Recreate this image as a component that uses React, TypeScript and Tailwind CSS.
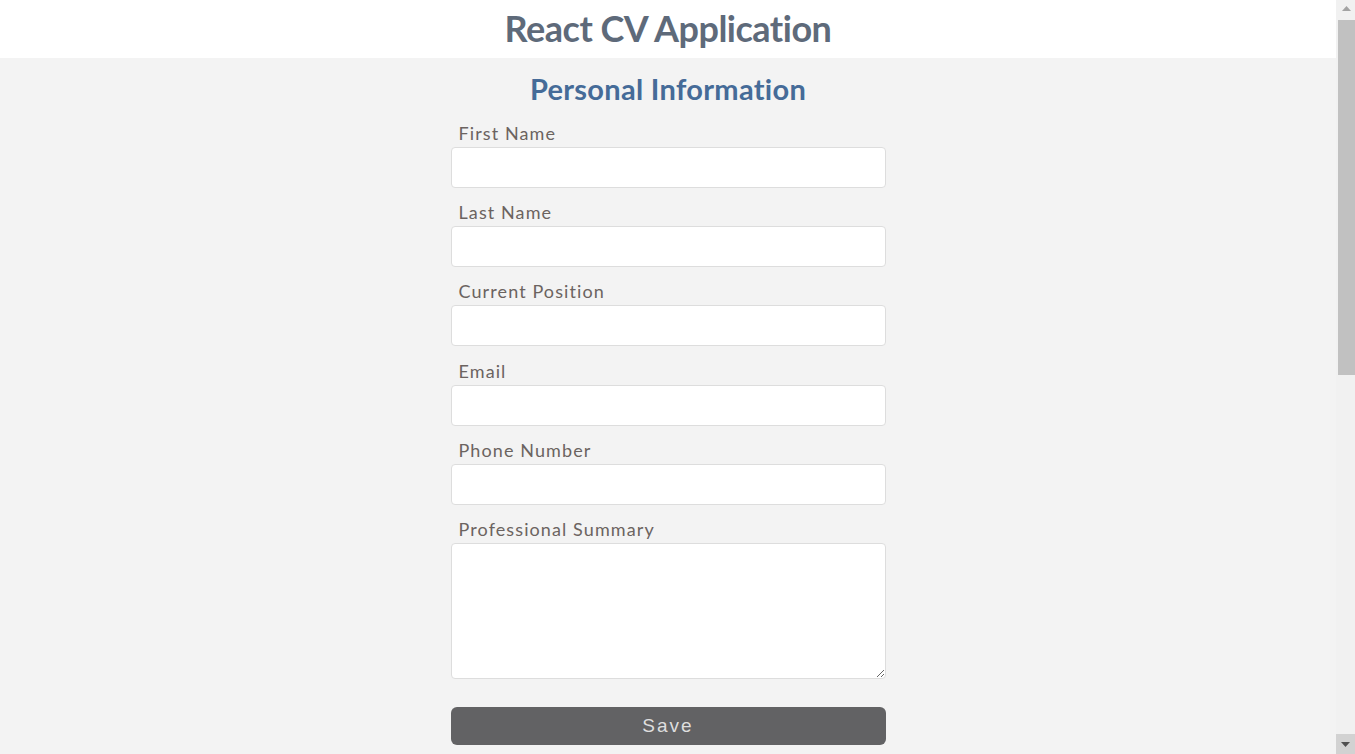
import React from 'react';

const fields = ['First Name', 'Last Name', 'Current Position', 'Email', 'Phone Number'];

function Field({ label }: { label: string }) {
    return (
        <div className="flex flex-col">
            <label className="pl-2 text-[18px] leading-[22px] tracking-[1.1px] text-[#6b6360] mb-[3px]">{label}</label>
            <input
                type="text"
                className="h-[41px] w-full rounded-[4px] border border-[#dddddd] bg-white px-2 outline-none"
            />
        </div>
    );
}

// page scrollbar as it looks in the window
function ScrollBar() {
    return (
        <div className="sticky top-0 h-screen w-[19px] shrink-0 bg-[#f1f1f1] pl-[2px] flex flex-col">
            <div className="h-[17px] flex items-center justify-center">
                <svg width="9" height="5" viewBox="0 0 9 5"><path d="M4.5 0L9 5H0z" fill="#a3a3a3" /></svg>
            </div>
            <div className="mt-[3px] h-[355px] bg-[#c1c1c1]" />
            <div className="flex-1" />
            <div className="h-[20px] -ml-[2px] bg-[#d2d2d2] flex items-center justify-center">
                <svg width="9" height="5" viewBox="0 0 9 5"><path d="M0 0H9L4.5 5z" fill="#505050" /></svg>
            </div>
        </div>
    );
}

export default function App() {
    return (
        <div className="flex bg-[#f3f3f3] font-['Lato',sans-serif]">
            <div className="flex-1">
                <header className="h-[58px] bg-white flex items-center justify-center">
                    <h1 className="text-[36px] font-bold text-[#5e6a7a] tracking-[-0.5px] leading-[40px] -mt-[3px]">React CV Application</h1>
                </header>

                <main className="flex flex-col items-center pb-[780px]">
                    <h2 className="mt-[13px] text-[29px] font-bold text-[#456b98] leading-[36px] tracking-[0.3px]">Personal Information</h2>

                    <form className="w-[435px] mt-[15px] flex flex-col gap-[13.2px]" onSubmit={e => e.preventDefault()}>
                        {fields.map(f => <Field key={f} label={f} />)}

                        <div className="flex flex-col">
                            <label className="pl-2 text-[18px] leading-[22px] tracking-[1.1px] text-[#6b6360] mb-[3px]">Professional Summary</label>
                            <textarea className="h-[136px] w-full rounded-[4px] border border-[#dddddd] bg-white px-2 outline-none" />
                        </div>

                        <button
                            type="submit"
                            className="mt-[15px] h-[38px] w-full rounded-[6px] bg-[#626264] text-[#dedede] text-[19px] tracking-[2px] font-['Liberation_Sans',sans-serif]"
                        >
                            Save
                        </button>
                    </form>
                </main>
            </div>
            <ScrollBar />
        </div>
    );
}
